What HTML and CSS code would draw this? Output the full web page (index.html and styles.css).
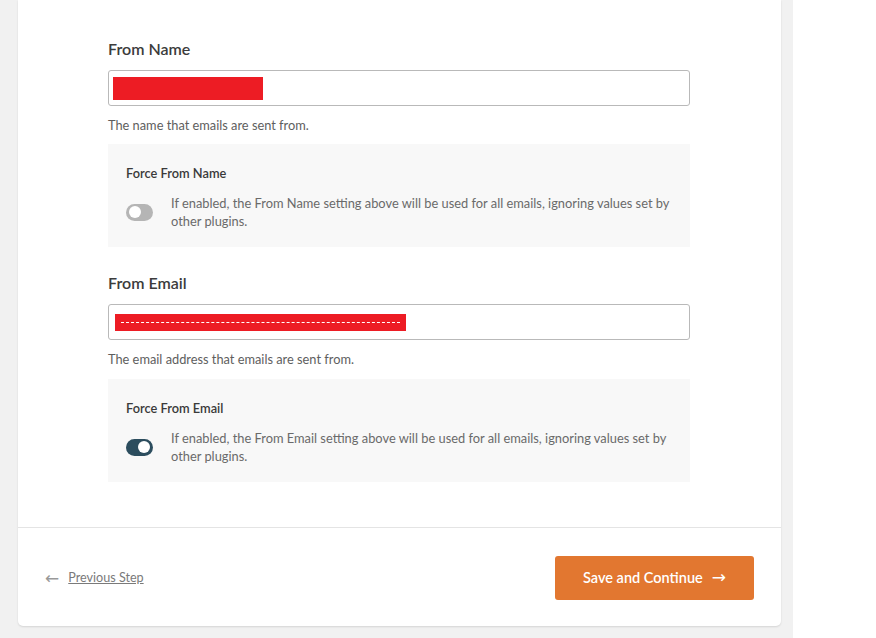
FILE: index.html
```html
<!DOCTYPE html>
<html>
<head>
<meta charset="utf-8">
<link rel="stylesheet" href="styles.css">
</head>
<body>
<div class="page">
  <div class="main">
    <div class="card">
      <div class="content">
        <div class="field">
          <div class="label">From Name</div>
          <div class="input"><span class="redact redact-name"></span></div>
          <div class="desc">The name that emails are sent from.</div>
          <div class="box">
            <div class="box-title">Force From Name</div>
            <div class="box-row">
              <span class="toggle"><span class="knob"></span></span>
              <p class="box-text">If enabled, the From Name setting above will be used for all emails, ignoring values set by other plugins.</p>
            </div>
          </div>
        </div>
        <div class="field field-next">
          <div class="label">From Email</div>
          <div class="input"><span class="redact redact-email"><span class="dash"></span></span></div>
          <div class="desc">The email address that emails are sent from.</div>
          <div class="box box-email">
            <div class="box-title">Force From Email</div>
            <div class="box-row">
              <span class="toggle on"><span class="knob"></span></span>
              <p class="box-text">If enabled, the From Email setting above will be used for all emails, ignoring values set by other plugins.</p>
            </div>
          </div>
        </div>
      </div>
      <div class="footer">
        <a class="prev" href="#"><span class="prev-arrow">&#8592;</span><span class="prev-text">Previous Step</span></a>
        <button class="save">Save and Continue <span class="save-arrow">&#8594;</span></button>
      </div>
    </div>
  </div>
  <div class="side"></div>
</div>
</body>
</html>
```

FILE: styles.css
```css
html, body {
  margin: 0;
  padding: 0;
  height: 100%;
}
body {
  font-family: Lato, "Open Sans", "Liberation Sans", sans-serif;
  color: #444;
  background: #fff;
}
.page {
  display: flex;
  height: 638px;
  overflow: hidden;
}
.main {
  width: 793px;
  background: #f1f1f1;
  padding: 0 12px 0 18px;
  box-sizing: border-box;
  flex: none;
}
.side {
  flex: 1;
  background: #fff;
}
.card {
  background: #fff;
  border-radius: 0 0 5px 5px;
  box-shadow: 0 1px 2px rgba(0,0,0,0.12);
  height: 626px;
  display: flex;
  flex-direction: column;
}
.content {
  padding: 39px 91px 45px 90px;
  border-bottom: 1px solid #e4e4e4;
}
.field-next {
  margin-top: 26px;
}
.label {
  font-size: 16px;
  line-height: 20px;
  font-weight: 600;
  color: #3c3c3c;
  margin-bottom: 11px;
}
.input {
  height: 34px;
  border: 1px solid #b9b9b9;
  border-radius: 3px;
  display: flex;
  align-items: center;
  padding: 0 4px;
}
.redact {
  background: #ed1c24;
  display: block;
}
.redact-name {
  width: 150px;
  height: 23px;
}
.redact-email {
  width: 291px;
  height: 17px;
  margin-left: 2px;
  display: flex;
  align-items: center;
  padding: 0 6px;
  box-sizing: border-box;
}
.dash {
  display: block;
  width: 100%;
  border-top: 1px dashed #fff;
}
.desc {
  font-size: 12.8px;
  line-height: 18px;
  color: #5e5e5e;
  margin-top: 10px;
}
.box {
  margin-top: 10px;
  background: #f8f8f8;
  padding: 20px 18px 17px 18px;
}
.box-email {
  margin-top: 11px;
}
.box-title {
  font-size: 12.8px;
  line-height: 18px;
  font-weight: 600;
  color: #3a3a3a;
}
.box-row {
  margin-top: 12px;
  display: flex;
  align-items: center;
}
.toggle {
  flex: none;
  width: 27px;
  height: 17px;
  border-radius: 9px;
  background: #b5b5b5;
  position: relative;
  margin-right: 18px;
}
.toggle .knob {
  position: absolute;
  top: 2.5px;
  left: 3px;
  width: 12px;
  height: 12px;
  border-radius: 50%;
  background: #fff;
}
.toggle.on {
  background: #2c4d5e;
}
.toggle.on .knob {
  left: auto;
  right: 3px;
}
.box-text {
  margin: 0;
  font-size: 12.85px;
  line-height: 18px;
  color: #6a6a6a;
}
.footer {
  flex: 1;
  display: flex;
  align-items: flex-start;
  justify-content: space-between;
  padding: 28px 27px 0 27px;
}
.prev {
  display: flex;
  align-items: center;
  margin-top: 12px;
  color: #7a7a7a;
  text-decoration: none;
  font-size: 12.6px;
  line-height: 20px;
}
.prev-arrow {
  color: #999;
  font-size: 17px;
  margin-right: 9px;
  font-family: "DejaVu Sans", sans-serif;
}
.prev-text {
  text-decoration: underline;
}
.save {
  width: 199px;
  height: 44px;
  border: none;
  border-radius: 3px;
  background: #e27730;
  color: #fff;
  font-family: Lato, "Open Sans", sans-serif;
  font-size: 14.5px;
  font-weight: 600;
  display: flex;
  align-items: center;
  justify-content: center;
  padding: 0 0 2px 0;
}
.save-arrow {
  font-family: "DejaVu Sans", sans-serif;
  font-size: 17px;
  margin-left: 9px;
  font-weight: 400;
}
```
